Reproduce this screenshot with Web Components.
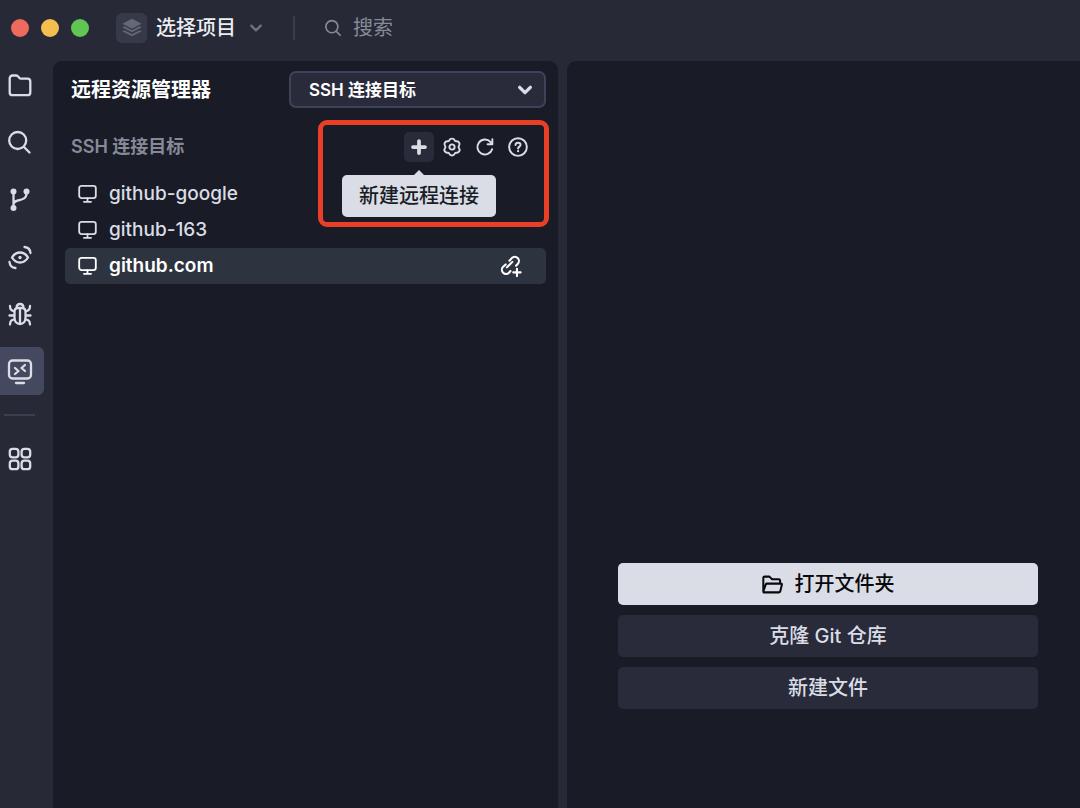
<!DOCTYPE html>
<html lang="zh-CN">
<head>
<meta charset="utf-8">
<meta name="viewport" content="width=device-width, initial-scale=1">
<title>远程资源管理器</title>
<style>
  :root {
    --chrome: #272a36;
    --panel: #191b26;
    --control: #292b3a;
    --line: #3f4258;
    --light: #dadde5;
    --muted: #868a98;
  }
  body {
    margin: 0;
    background: var(--chrome);
    color: var(--light);
    font: 500 20px/28px Inter, "Noto Sans CJK SC", sans-serif;
  }
</style>
</head>
<body>
<ide-window></ide-window>

<script>
// every icon is drawn with strokes in currentColor unless it says otherwise
const icons = {
  folder: `<path d="M4.500 1.500h3.500c.8 0 1.400.3 1.900.8l1.500 1.700c.4.400.9.600 1.500.6h6.600a2.800 2.800 0 0 1 2.800 2.800v11a2.800 2.800 0 0 1-2.800 2.800h-15a2.800 2.800 0 0 1-2.800-2.800V4.300a2.800 2.800 0 0 1 2.800-2.800z"/>`,
  search: `<circle cx="9.700" cy="9.500" r="8.500"/><path d="M16 16l5.500 5.500"/>`,
  branch: `<path d="M5.500 4v16.500M18.500 4v1.500c0 3.500-1.800 5.200-5 6-4 1-8 1.500-8 5"/><g fill="currentColor" stroke="none"><circle cx="5.500" cy="3.500" r="3"/><circle cx="18.500" cy="3.500" r="3"/><circle cx="5.500" cy="20" r="3"/></g>`,
  watch: `<path d="M4 12.500c2-3.300 4.500-5 8-5s6 1.700 8 5c-2 3.300-4.500 5-8 5s-6-1.700-8-5z"/><circle cx="12" cy="12.500" r="1.700" fill="currentColor" stroke="none"/><path d="M16.500 2c3.400.3 5.700 2.500 6 6M7.500 23c-3.400-.3-5.700-2.500-6-6"/>`,
  bug: `<path d="M6.500 10c0-2.500 1.200-4 3.300-4h4.400c2.100 0 3.300 1.500 3.300 4v5.500c0 4-2.200 6.500-5.500 6.500s-5.500-2.500-5.500-6.500zM8.500 5.800C8.500 3.500 9.700 2 12 2s3.500 1.500 3.500 3.800M12 6v16M2 4c0 3 1.500 5 4.500 5.300M22 4c0 3-1.500 5-4.500 5.300M1.500 13.500h5M17.500 13.500h5M2 22.500c0-3 1.500-4.800 4.800-5.300M22 22.500c0-3-1.500-4.800-4.800-5.300"/>`,
  remote: `<rect x="1" y="1.500" width="22" height="18" rx="3.500"/><path d="M7 9l3.500 3L7 15M17 6l-3.500 3 3.500 3"/><path d="M8 24h8"/>`,
  apps: `<rect x="1.800" y="1.800" width="8.600" height="8.600" rx="2.800"/><rect x="13.600" y="1.800" width="8.600" height="8.600" rx="2.800"/><rect x="1.800" y="13.600" width="8.600" height="8.600" rx="2.800"/><rect x="13.600" y="13.600" width="8.600" height="8.600" rx="2.800"/>`,
  layers: `<g fill="currentColor" stroke="none"><path d="M12 1l11.500 6L12 13 .5 7z"/><path d="M.5 11.200L2.800 10l9.200 4.800 9.200-4.800 2.300 1.200L12 17.200z"/><path d="M.5 15.800l2.300-1.200 9.200 4.800 9.200-4.800 2.300 1.200L12 21.800z"/></g>`,
  chevron: `<path d="M4 8l8 8 8-8"/>`,
  plus: `<path d="M12 4v16M4 12h16"/>`,
  gear: `<path d="M8.500 3C9 1.500 10.200.8 12 .8s3 .7 3.500 2.200c.4 1.200 1 1.500 2.300 1.300 1.700-.2 2.900.4 3.800 1.900.9 1.600.8 2.900-.3 4.200-.8 1-.8 2.200 0 3.200 1.100 1.300 1.200 2.600.3 4.200-.9 1.500-2.100 2.100-3.800 1.900-1.300-.2-1.900.1-2.300 1.300-.5 1.500-1.700 2.200-3.500 2.200s-3-.7-3.500-2.200c-.4-1.200-1-1.500-2.300-1.300-1.700.2-2.900-.4-3.800-1.900-.9-1.600-.8-2.900.3-4.200.8-1 .8-2.200 0-3.200C1.600 9.100 1.500 7.800 2.400 6.200c.9-1.500 2.100-2.100 3.800-1.900C7.500 4.500 8.100 4.200 8.500 3z"/><circle cx="12" cy="12" r="3.500"/>`,
  refresh: `<path d="M21.500 15A10 10 0 1 1 19.500 5.500L21.500 8M21.800 1.500v6.800h-6.300"/>`,
  help: `<circle cx="12" cy="12" r="11.800"/><path d="M8.700 9.300c.2-2 1.500-3 3.400-3s3.300 1.100 3.300 2.800c0 2.400-3.300 2.400-3.300 5"/><circle cx="12.100" cy="17.500" r="1.500" fill="currentColor" stroke="none"/>`,
  monitor: `<rect x="1.500" y="1" width="21" height="15.500" rx="3"/><path d="M12 16.500V21M7.500 21.300h9"/>`,
  connect: `<path d="M7.500 13.500l6-6M10.300 6.200l2.600-2.800a4.500 4.500 0 0 1 6.400 6.400l-1.800 1.800M6.200 10.300l-2.800 2.600a4.500 4.500 0 0 0 6.400 6.400l1.600-1.800"/><path d="M18.500 15v8M14.500 19h8"/>`,
  open: `<path d="M1.500 20V4.500C1.500 3.500 2 3 3 3h5.500l3 3H19c1 0 1.700.7 1.700 1.700V11M1.500 20l2.800-8c.3-.7.7-1 1.400-1h16c.9 0 1.300.5 1 1.400l-1.800 7.200c-.3 1-.8 1.400-1.700 1.400H2.500c-.7 0-1-.3-1-1z"/>`
};

const reset = `
  :host { box-sizing: border-box; }
  * { box-sizing: border-box; }
  button, input, select { font: inherit; color: inherit; margin: 0; padding: 0; border: 0; background: none; }
  button { cursor: pointer; }
`;

function render(host, style, html) {
  const tmpl = document.createElement("template");
  tmpl.innerHTML = `<style>${reset}${style}</style>${html}`;
  host.attachShadow({ mode: "open" }).appendChild(tmpl.content.cloneNode(true));
}

class IdeIcon extends HTMLElement {
  constructor() {
    super();
    render(this, `
      :host { display: block; flex: none; width: var(--size, 24px); height: var(--size, 24px); }
      svg { display: block; width: 100%; height: 100%; overflow: visible; fill: none; stroke: currentColor;
            stroke-width: var(--stroke, 2.3); stroke-linecap: round; stroke-linejoin: round; }
    `, `<svg viewBox="0 0 24 24" aria-hidden="true">${icons[this.getAttribute("name")]}</svg>`);
  }
}

class TitleBar extends HTMLElement {
  constructor() {
    super();
    render(this, `
      :host { display: flex; align-items: center; height: 61px; padding: 0 11px 5px; }
      .lights { display: flex; gap: 12px; }
      .lights button { width: 18px; height: 18px; border-radius: 50%; }
      .close { background: #ee6a5f; }
      .minimize { background: #f5bf4f; }
      .zoom { background: #61c554; }
      .project { display: flex; align-items: center; gap: 9px; margin-left: 27px; color: #eceef4; }
      .badge { display: grid; place-items: center; width: 31px; height: 30px; border-radius: 6px; background: #363a48; color: #646979; --size: 20px; }
      .project > ide-icon { margin-left: 4px; color: #6d7180; --size: 14px; --stroke: 4; }
      .divider { width: 2px; height: 24px; margin: 0 30px; background: #3a3d4e; }
      label { display: flex; flex: 1; align-items: center; gap: 11px; color: var(--muted); }
      label ide-icon { --size: 17px; --stroke: 2.4; }
      input { flex: 1; min-width: 0; height: 28px; outline: 0; font-weight: 400; }
      input::placeholder { color: inherit; opacity: 1; }
    `, `
      <div class="lights">
        <button class="close" aria-label="关闭"></button>
        <button class="minimize" aria-label="最小化"></button>
        <button class="zoom" aria-label="缩放"></button>
      </div>
      <button class="project"><span class="badge"><ide-icon name="layers"></ide-icon></span><span>选择项目</span><ide-icon name="chevron"></ide-icon></button>
      <span class="divider"></span>
      <label><ide-icon name="search"></ide-icon><input type="text" placeholder="搜索" aria-label="搜索"></label>
    `);
  }
}

class ActivityBar extends HTMLElement {
  constructor() {
    super();
    render(this, `
      :host { display: block; }
      nav { display: flex; flex-direction: column; align-items: flex-start; gap: 9px; padding-top: 1px; }
      button { display: grid; place-items: center; width: 44px; height: 48px; padding-right: 4px; border-radius: 0 6px 6px 0; }
      button[aria-current] { background: #444960; }
      hr { width: 31px; height: 2px; margin: 10px 0 10px 4px; border: 0; background: #3c3f52; }
    `, `
      <nav aria-label="活动栏">
        <button aria-label="文件"><ide-icon name="folder"></ide-icon></button>
        <button aria-label="搜索"><ide-icon name="search"></ide-icon></button>
        <button aria-label="源代码管理"><ide-icon name="branch"></ide-icon></button>
        <button aria-label="预览"><ide-icon name="watch"></ide-icon></button>
        <button aria-label="调试"><ide-icon name="bug"></ide-icon></button>
        <button aria-label="远程" aria-current="page"><ide-icon name="remote"></ide-icon></button>
        <hr>
        <button aria-label="扩展"><ide-icon name="apps"></ide-icon></button>
      </nav>
    `);
  }
}

// icon button, the slot holds the text of its tooltip
class ToolButton extends HTMLElement {
  constructor() {
    super();
    render(this, `
      :host { display: block; position: relative; --size: 18px; --stroke: 2.6; }
      button { display: grid; place-items: center; width: 30px; height: 30px; border-radius: 5px; }
      :host([active]) { --stroke: 5; }
      :host([active]) button { background: var(--control); }
      .tip { display: none; }
      :host([active]) .tip {
        display: block; position: absolute; z-index: 1; top: 43px; left: 50%; transform: translateX(-50%);
        padding: 7px 17px; border-radius: 5px; background: var(--light); color: var(--panel); white-space: nowrap;
      }
      .tip::before {
        content: ""; position: absolute; left: 50%; bottom: 100%; transform: translateX(-50%);
        border: 5px solid transparent; border-top: 0; border-bottom-color: var(--light);
      }
    `, `
      <button aria-label="${this.getAttribute("label")}"><ide-icon name="${this.getAttribute("icon")}"></ide-icon></button>
      <span class="tip" role="tooltip"><slot></slot></span>
    `);
  }
}

class HostItem extends HTMLElement {
  constructor() {
    super();
    render(this, `
      :host { display: flex; align-items: center; height: 36px; padding: 0 24px 0 13px; border-radius: 5px; font-size: 19px; }
      :host([selected]) { background: #2e3340; color: #fff; font-weight: 600; }
      .name { display: flex; flex: 1; align-items: center; gap: 12px; text-align: left; --size: 19px; }
      .connect { display: none; --size: 22px; }
      :host([selected]) .connect { display: block; }
    `, `
      <button class="name"><ide-icon name="monitor"></ide-icon><slot></slot></button>
      <button class="connect" aria-label="连接"><ide-icon name="connect"></ide-icon></button>
    `);
  }
}

class RemoteExplorer extends HTMLElement {
  constructor() {
    super();
    render(this, `
      :host { display: block; padding: 10px 12px; border-radius: 9px 9px 0 0; background: var(--panel); }
      header { display: flex; align-items: center; justify-content: space-between; padding-left: 6px; }
      h1 { margin: 0; color: #fff; font-size: 20px; font-weight: 700; }
      .picker { display: grid; align-items: center; width: 257px; color: #fff; font-size: 17px; font-weight: 600; }
      .picker > * { grid-area: 1 / 1; }
      .picker ide-icon { justify-self: end; margin-right: 13px; color: var(--light); pointer-events: none; --size: 16px; --stroke: 5; }
      select { width: 100%; height: 37px; padding: 0 18px; border: 2px solid var(--line); border-radius: 7px; background: var(--control); appearance: none; }
      .section { position: relative; display: flex; align-items: center; justify-content: space-between; margin-top: 24px; padding: 0 13px 0 6px; }
      h2 { margin: 0; color: var(--muted); font-size: 18px; font-weight: 600; }
      .tools { display: flex; gap: 3px; }
      .marker { position: absolute; top: -12px; right: -3px; width: 231px; height: 107px; border: 5px solid #e93f26; border-radius: 9px; pointer-events: none; }
      .hosts { margin-top: 14px; }
    `, `
      <header>
        <h1>远程资源管理器</h1>
        <div class="picker">
          <select aria-label="视图"><option>SSH 连接目标</option></select>
          <ide-icon name="chevron"></ide-icon>
        </div>
      </header>
      <div class="section">
        <h2>SSH 连接目标</h2>
        <div class="tools">
          <tool-button icon="plus" label="新建远程连接" active>新建远程连接</tool-button>
          <tool-button icon="gear" label="设置"></tool-button>
          <tool-button icon="refresh" label="刷新"></tool-button>
          <tool-button icon="help" label="帮助"></tool-button>
        </div>
        <span class="marker"></span>
      </div>
      <div class="hosts">
        <host-item>github-google</host-item>
        <host-item>github-163</host-item>
        <host-item selected>github.com</host-item>
      </div>
    `);
  }
}

class WelcomePane extends HTMLElement {
  constructor() {
    super();
    render(this, `
      :host { display: flex; flex-direction: column; justify-content: flex-end; gap: 10px; padding: 0 42px 99px 51px;
              border-radius: 9px 0 0 0; background: var(--panel); }
      button { display: flex; align-items: center; justify-content: center; gap: 12px; height: 42px; border-radius: 5px; background: var(--control); --size: 21px; }
      .primary { background: var(--light); color: #08090d; }
    `, `
      <button class="primary"><ide-icon name="open"></ide-icon>打开文件夹</button>
      <button>克隆 Git 仓库</button>
      <button>新建文件</button>
    `);
  }
}

class IdeWindow extends HTMLElement {
  constructor() {
    super();
    render(this, `
      :host { display: flex; flex-direction: column; min-height: 100vh; }
      main { display: grid; flex: 1; grid-template-columns: 53px minmax(0, 505fr) 9px minmax(0, 513fr); }
      welcome-pane { grid-column: 4; }
    `, `
      <title-bar></title-bar>
      <main>
        <activity-bar></activity-bar>
        <remote-explorer></remote-explorer>
        <welcome-pane></welcome-pane>
      </main>
    `);
  }
}

customElements.define("ide-icon", IdeIcon);
customElements.define("title-bar", TitleBar);
customElements.define("activity-bar", ActivityBar);
customElements.define("tool-button", ToolButton);
customElements.define("host-item", HostItem);
customElements.define("remote-explorer", RemoteExplorer);
customElements.define("welcome-pane", WelcomePane);
customElements.define("ide-window", IdeWindow);
</script>
</body>
</html>
